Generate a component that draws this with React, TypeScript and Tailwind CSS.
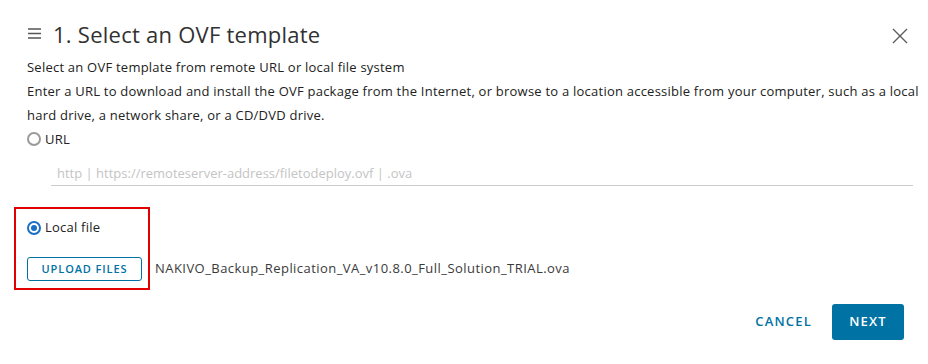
import React from "react";

export default function App() {
  return (
    <div className="w-[928px] h-[364px] bg-white relative overflow-hidden" style={{ fontFamily: "'Open Sans', Lato, sans-serif" }}>
      <div className="flex items-center justify-between pl-[28px] pr-[20px] pt-[17px] h-[50px]">
        <div className="flex items-center gap-[12px]">
          <svg width="13" height="11" viewBox="0 0 13 11" className="text-[#565656]">
            <path d="M0 1h13M0 5.5h13M0 10h13" stroke="currentColor" strokeWidth="1.4" />
          </svg>
          <h1 className="text-[22px] text-[#313131] font-normal leading-none tracking-[0.25px]">1. Select an OVF template</h1>
        </div>
        <svg width="16" height="16" viewBox="0 0 16 16" className="text-[#5c5c5c] mt-[4px]">
          <path d="M1 1L15 15M15 1L1 15" stroke="currentColor" strokeWidth="1.4" />
        </svg>
      </div>
      <div className="pl-[27px] pr-[8px] pt-[5px] text-[13px] text-[#222] leading-[24px] tracking-[0.23px]">
        <p>Select an OVF template from remote URL or local file system</p>
        <p>Enter a URL to download and install the OVF package from the Internet, or browse to a location accessible from your computer, such as a local hard drive, a network share, or a CD/DVD drive.</p>
        <label className="flex items-center gap-[4px] h-[24px]">
          <span className="w-[14px] h-[14px] rounded-full border-[2px] border-[#9a9a9a] bg-white"></span>
          <span>URL</span>
        </label>
        <div className="ml-[24px] mr-[7px] mt-[9px] border-b border-[#cccccc] h-[26px] flex items-center pl-[6px]">
          <span className="text-[13px] text-[#c4c4c4] tracking-normal">http | https://remoteserver-address/filetodeploy.ovf | .ova</span>
        </div>
      </div>
      <div className="absolute left-[14px] top-[207px] w-[136px] h-[83px] border-[2px] border-[#e00000]"></div>
      <div className="px-[27px] mt-[30px] text-[13px] text-[#222]">
        <label className="flex items-center gap-[4px] h-[24px] tracking-[0.23px]">
          <span className="w-[14px] h-[14px] rounded-full border-[2px] border-[#1a6fc4] bg-white flex items-center justify-center">
            <span className="w-[6px] h-[6px] rounded-full bg-[#1a6fc4]"></span>
          </span>
          <span>Local file</span>
        </label>
        <div className="flex items-center mt-[17px] gap-[13px]">
          <button className="w-[115px] h-[24px] border border-[#0072a3] rounded-[3px] text-[#0072a3] text-[11px] font-semibold tracking-[0.9px] flex items-center justify-center">UPLOAD FILES</button>
          <span className="text-[#3a3a3a] tracking-[0.45px]">NAKIVO_Backup_Replication_VA_v10.8.0_Full_Solution_TRIAL.ova</span>
        </div>
      </div>
      <div className="absolute right-[24px] top-[304px] flex items-center gap-[8px]">
        <button className="h-[36px] px-[12px] text-[#0072a3] text-[13px] font-semibold tracking-[1.2px]">CANCEL</button>
        <button className="h-[36px] w-[72px] rounded-[3px] bg-[#0072a3] text-white text-[13px] font-semibold tracking-[1.2px]">NEXT</button>
      </div>
    </div>
  );
}
